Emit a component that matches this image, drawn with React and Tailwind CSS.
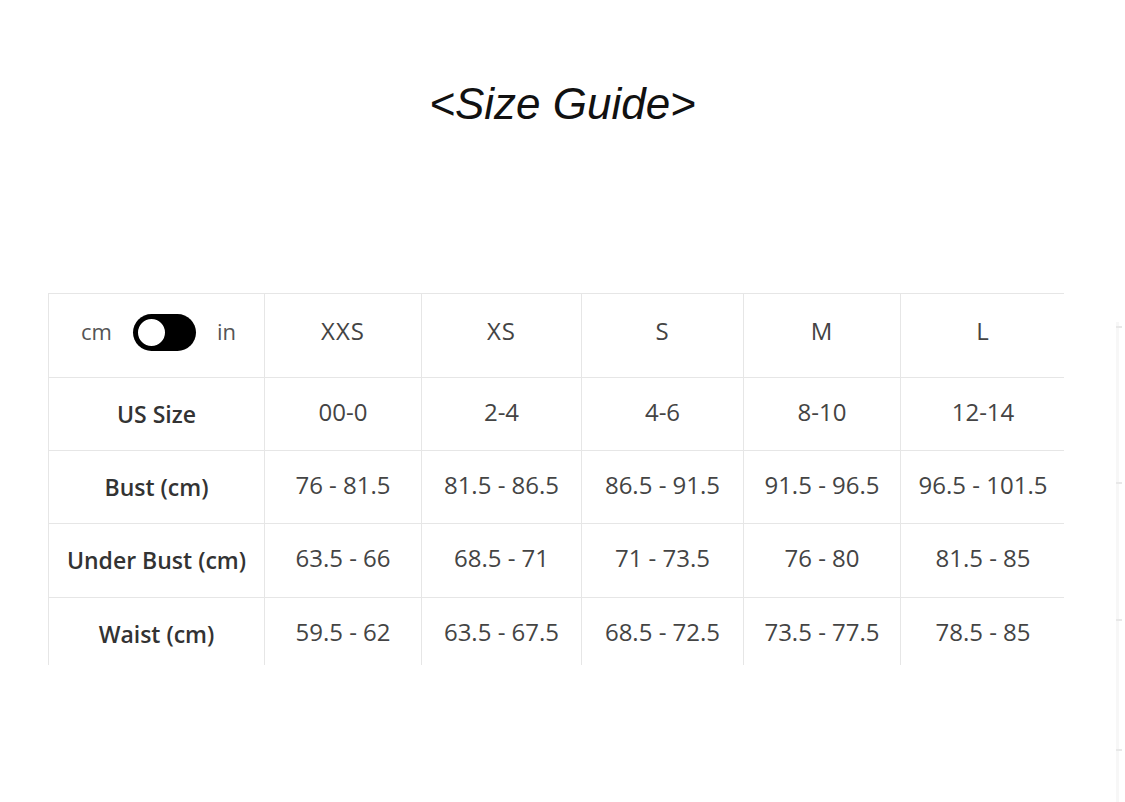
import React, { useState } from "react";

const sizes = ["XXS", "XS", "S", "M", "L"];

const rows = [
  { label: "US Size", values: ["00-0", "2-4", "4-6", "8-10", "12-14"], h: "h-[73px]" },
  { label: "Bust (cm)", values: ["76 - 81.5", "81.5 - 86.5", "86.5 - 91.5", "91.5 - 96.5", "96.5 - 101.5"], h: "h-[73px]" },
  { label: "Under Bust (cm)", values: ["63.5 - 66", "68.5 - 71", "71 - 73.5", "76 - 80", "81.5 - 85"], h: "h-[74px]" },
  { label: "Waist (cm)", values: ["59.5 - 62", "63.5 - 67.5", "68.5 - 72.5", "73.5 - 77.5", "78.5 - 85"], h: "h-[74px]" },
];

const Toggle = ({ on, onChange }) => (
  <button
    onClick={() => onChange(!on)}
    className="relative w-[63px] h-[37px] rounded-full bg-black"
  >
    <span
      className={`absolute top-[2px] w-[33px] h-[33px] rounded-full bg-white border-[3px] border-black ${
        on ? "left-[28px]" : "left-[2px]"
      }`}
    ></span>
  </button>
);

export default function App() {
  const [inches, setInches] = useState(false);

  return (
    <div className="w-[1125px] h-[802px] bg-white relative overflow-hidden font-['Open_Sans',sans-serif]">
      {/* Title */}
      <div className="pt-[78px] flex justify-center">
        <h1 className="text-[44px] leading-[52px] italic text-[#111] font-['Liberation_Sans',Arial,sans-serif]">
          &lt;Size Guide&gt;
        </h1>
      </div>

      {/* Table */}
      <div className="mt-[163px] ml-[48px] w-[1016px] h-[372px] overflow-hidden border-l border-t border-[#e6e6e6]">
        <div className="grid grid-cols-[216px_157px_160px_162px_157px_164px]">
          {/* header */}
          <div className="h-[84px] flex items-center justify-center gap-[21px] pl-[4px] pb-[6px] border-r border-b border-[#e6e6e6] text-[22px] text-[#555]">
            <span className="-mt-[2px]">cm</span>
            <Toggle on={inches} onChange={setInches} />
            <span className="-mt-[2px]">in</span>
          </div>
          {sizes.map((s, i) => (
            <div
              key={s}
              className={`h-[84px] flex items-center justify-center pb-[10px] border-b border-[#e6e6e6] text-[24px] tracking-[0.04em] text-[#444] ${
                i < sizes.length - 1 ? "border-r" : ""
              }`}
            >
              {s}
            </div>
          ))}

          {rows.map((r) => (
            <React.Fragment key={r.label}>
              <div
                className={`${r.h} flex items-center justify-center border-r border-b border-[#e6e6e6] text-[23px] font-semibold text-[#333]`}
              >
                {r.label}
              </div>
              {r.values.map((v, i) => (
                <div
                  key={i}
                  className={`${r.h} flex items-center justify-center pb-[5px] border-b border-[#e6e6e6] text-[24px] text-[#444] ${
                    i < r.values.length - 1 ? "border-r" : ""
                  }`}
                >
                  {v}
                </div>
              ))}
            </React.Fragment>
          ))}
        </div>
      </div>

      {/* faint scroll edge on the right */}
      <div className="absolute left-[1116px] top-[322px] w-[3px] h-[480px] bg-[#f7f7f7]">
        <div className="mt-[4px] w-[6px] h-[2px] bg-[#e8e8e8]"></div>
        <div className="mt-[154px] w-[6px] h-[2px] bg-[#e8e8e8]"></div>
        <div className="mt-[135px] w-[6px] h-[2px] bg-[#e8e8e8]"></div>
        <div className="mt-[128px] w-[6px] h-[2px] bg-[#e8e8e8]"></div>
      </div>
    </div>
  );
}
